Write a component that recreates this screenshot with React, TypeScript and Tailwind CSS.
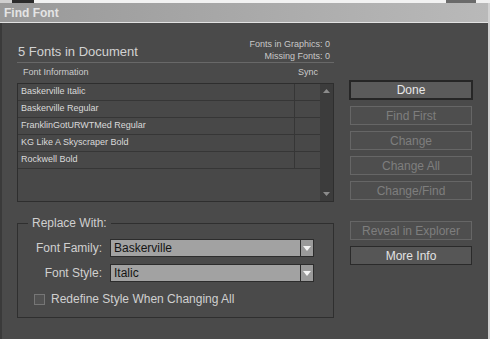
const fonts = [
  "Baskerville Italic",
  "Baskerville Regular",
  "FranklinGotURWTMed Regular",
  "KG Like A Skyscraper Bold",
  "Rockwell Bold",
]

function SideButton({ label, enabled = false, first = false }: { label: string; enabled?: boolean; first?: boolean }) {
  if (first) {
    return (
      <button className="w-[124px] h-[20px] border-2 border-[#262626] bg-[#5b5b5b] text-[12px] leading-none text-[#e8e8e8]">
        {label}
      </button>
    )
  }
  return (
    <button
      className={`ml-[1px] w-[122px] h-[19px] border text-[12px] leading-none ${
        enabled ? "border-[#2a2a2a] bg-[#565656] text-[#e2e2e2]" : "border-[#666666] bg-[#4e4e4e] text-[#7e7e7e]"
      }`}
    >
      {label}
    </button>
  )
}

function Dropdown({ value }: { value: string }) {
  return (
    <div className="w-[204px] h-[18px] flex border border-[#2c2c2c]">
      <div className="flex-1 bg-[#a2a2a2] pl-[3px] flex items-center text-[12px] text-[#141414]">{value}</div>
      <div className="w-[13px] border-l border-[#2c2c2c] bg-[#9a9a9a] flex items-center justify-center">
        <svg width="8" height="5" viewBox="0 0 8 5">
          <path d="M0 0 H8 L4 5 Z" fill="#f4f4f4" />
        </svg>
      </div>
    </div>
  )
}

export default function App() {
  return (
    <div className="w-[490px] h-[339px] flex flex-col bg-[#dcdcdc] overflow-hidden font-['Liberation_Sans',Arial,sans-serif]">
      {/* strip of the window behind */}
      <div className="h-[3px] flex shrink-0">
        <div className="w-[12px] bg-[#cfcfcf]" />
        <div className="w-[22px] bg-[#2b2b2b]" />
        <div className="flex-1 bg-[#f2f2f2]" />
        <div className="w-[30px] bg-[#6a6a6a]" />
        <div className="w-[14px] bg-[#f0f0f0]" />
      </div>

      <div className="flex-1 flex flex-col border-r-2 border-[#d2d2d2]">
        {/* title bar */}
        <div className="h-[20px] shrink-0 flex items-center pl-[4px] bg-gradient-to-r from-[#999999] to-[#b9b9b9] border-b border-[#e2e2e2] text-[12px] font-bold text-[#e4e4e4]">
          Find Font
        </div>

        <div className="flex-1 flex bg-[#4a4a4a] border-l-2 border-[#3a3a3a] pl-[15px]">
          {/* left column */}
          <div className="w-[317px] flex flex-col">
            <div className="pt-[15px] flex items-end justify-between border-b border-[#686868]">
              <div className="mb-[2px] pl-[1px] text-[13px] leading-[16px] text-[#d2d2d2]">5 Fonts in Document</div>
              <div className="pr-[4px] text-right text-[9px] leading-[12px] text-[#c8c8c8]">
                <div>Fonts in Graphics: 0</div>
                <div>Missing Fonts: 0</div>
              </div>
            </div>

            <div className="h-[20px] flex items-center text-[9px] text-[#cccccc]">
              <div className="flex-1 pl-[6px]">Font Information</div>
              <div className="w-[26px] text-center">Sync</div>
              <div className="w-[13px]" />
            </div>

            <div className="h-[119px] flex border border-[#2e2e2e] bg-[#484848]">
              <div className="flex-1 flex flex-col">
                {fonts.map((f) => (
                  <div key={f} className="h-[17px] flex border-b border-[#363636] text-[9px] text-[#dadada]">
                    <div className="flex-1 pl-[3px] flex items-center">{f}</div>
                    <div className="w-[26px] border-l border-[#363636]" />
                  </div>
                ))}
              </div>
              <div className="w-[13px] bg-[#3c3c3c] flex flex-col items-center justify-between py-[5px]">
                <svg width="7" height="4" viewBox="0 0 7 4">
                  <path d="M0 4 H7 L3.5 0 Z" fill="#8c8c8c" />
                </svg>
                <svg width="7" height="4" viewBox="0 0 7 4">
                  <path d="M0 0 H7 L3.5 4 Z" fill="#8c8c8c" />
                </svg>
              </div>
            </div>

            {/* replace with group */}
            <div className="relative mt-[21px] h-[95px] border border-[#2f2f2f] pt-[15px]">
              <span className="absolute left-[10px] -top-[8px] px-[4px] bg-[#4a4a4a] text-[12px] leading-[14px] text-[#d0d0d0]">
                Replace With:
              </span>
              <div className="flex flex-col gap-[7px]">
                <div className="flex items-center gap-[8px]">
                  <div className="w-[84px] text-right text-[12px] text-[#d0d0d0]">Font Family:</div>
                  <Dropdown value="Baskerville" />
                </div>
                <div className="flex items-center gap-[8px]">
                  <div className="w-[84px] text-right text-[12px] text-[#d0d0d0]">Font Style:</div>
                  <Dropdown value="Italic" />
                </div>
              </div>
              <div className="mt-[10px] h-[14px] pl-[16px] flex items-center gap-[6px]">
                <div className="w-[11px] h-[11px] border border-[#767676] bg-[#525252]" />
                <span className="text-[12px] text-[#d0d0d0]">Redefine Style When Changing All</span>
              </div>
            </div>
          </div>

          {/* right column */}
          <div className="ml-[15px] pt-[57px] flex flex-col items-start gap-[6px]">
            <SideButton label="Done" first />
            <SideButton label="Find First" />
            <SideButton label="Change" />
            <SideButton label="Change All" />
            <SideButton label="Change/Find" />
            <div className="h-[9px]" />
            <SideButton label="Reveal in Explorer" />
            <SideButton label="More Info" enabled />
          </div>
        </div>
      </div>
    </div>
  )
}
